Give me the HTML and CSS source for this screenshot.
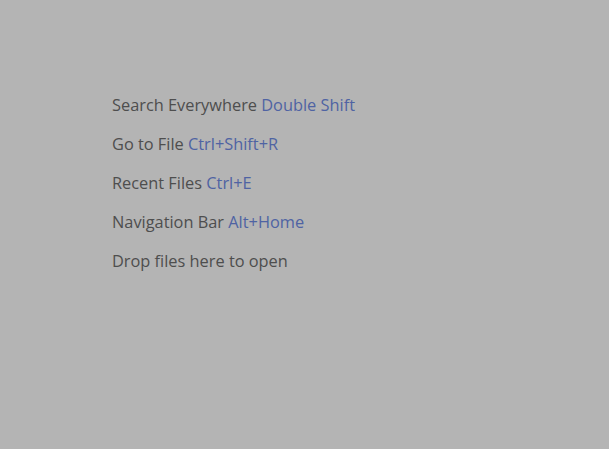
FILE: index.html
```html
<!DOCTYPE html>
<html>
<head><meta charset="utf-8"><link rel="stylesheet" href="styles.css"></head>
<body>
<div class="hints">
  <div class="hint">Search Everywhere <span class="key">Double Shift</span></div>
  <div class="hint">Go to File <span class="key">Ctrl+Shift+R</span></div>
  <div class="hint">Recent Files <span class="key">Ctrl+E</span></div>
  <div class="hint">Navigation Bar <span class="key">Alt+Home</span></div>
  <div class="hint">Drop files here to open</div>
</div>
</body>
</html>
```
FILE: styles.css
```css
html, body { margin: 0; height: 100%; }
body { background: #b4b4b4; font-family: "Open Sans", sans-serif; }
.hints { padding: 86px 0 0 112px; display: flex; flex-direction: column; }
.hint { font-size: 16.35px; line-height: 39px; height: 39px; color: #4e4e4e; }
.key { color: #4f63a3; }
```
